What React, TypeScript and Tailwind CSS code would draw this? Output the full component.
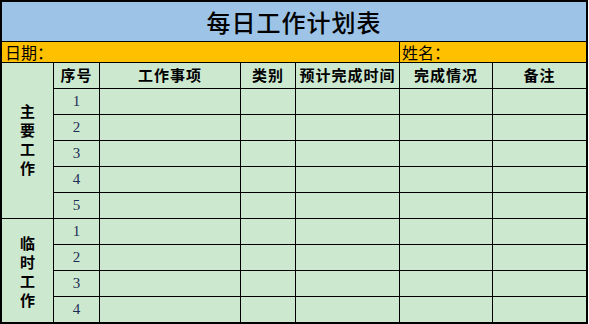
const cjk = { fontFamily: '"Noto Sans CJK SC", "Noto Sans", sans-serif' };
const serif = { fontFamily: '"Liberation Serif", "Noto Sans CJK SC", serif' };

const headers = ["序号", "工作事项", "类别", "预计完成时间", "完成情况", "备注"];

function Row({ n, last }: { n: number; last?: boolean }) {
  const b = last ? "" : "border-b";
  return (
    <>
      <div
        className={`flex items-center justify-center border-r border-black text-[15px] text-[#1c2d55] ${b}`}
        style={serif}
      >
        {n}
      </div>
      <div className={`border-r border-black ${b}`} />
      <div className={`border-r border-black ${b}`} />
      <div className={`border-r border-black ${b}`} />
      <div className={`border-r border-black ${b}`} />
      <div className={`border-black ${b}`} />
    </>
  );
}

function GroupLabel({ text, span, bottom }: { text: string; span: string; bottom?: boolean }) {
  return (
    <div
      className={`flex flex-col items-center justify-center border-r border-black text-[15px] font-bold leading-[19px] ${span} ${
        bottom ? "border-b pb-[4px]" : ""
      }`}
    >
      {text.split("").map((c, i) => (
        <span key={i}>{c}</span>
      ))}
    </div>
  );
}

export default function App() {
  return (
    <div className="h-[324px] w-[589px] bg-white" style={cjk}>
      <div className="flex h-[324px] w-[588px] flex-col border-2 border-black bg-[#cce8cf] text-black">
        <div className="flex h-[40px] items-center justify-center border-b border-black bg-[#9dc3e6] text-[24px] font-medium tracking-[1px]">
          每日工作计划表
        </div>
        <div className="flex h-[21px] border-b border-black bg-[#ffc000] text-[16px] leading-[20px]">
          <div className="w-[398px] border-r border-black pl-[3px]">日期：</div>
          <div className="flex-1 pl-[2px]">姓名：</div>
        </div>
        <div className="grid flex-1 grid-cols-[52px_46px_141px_55px_104px_93px_93px] grid-rows-[repeat(9,26px)_25px]">
          <GroupLabel text="主要工作" span="row-span-6" bottom />
          {headers.map((h, i) => (
            <div
              key={h}
              className={`flex items-center justify-center border-b border-black text-[15px] font-bold tracking-[1px] ${
                i < headers.length - 1 ? "border-r" : ""
              }`}
            >
              {h}
            </div>
          ))}
          {[1, 2, 3, 4, 5].map((n) => (
            <Row key={`a${n}`} n={n} />
          ))}
          <GroupLabel text="临时工作" span="row-span-4" />
          {[1, 2, 3, 4].map((n) => (
            <Row key={`b${n}`} n={n} last={n === 4} />
          ))}
        </div>
      </div>
    </div>
  );
}
